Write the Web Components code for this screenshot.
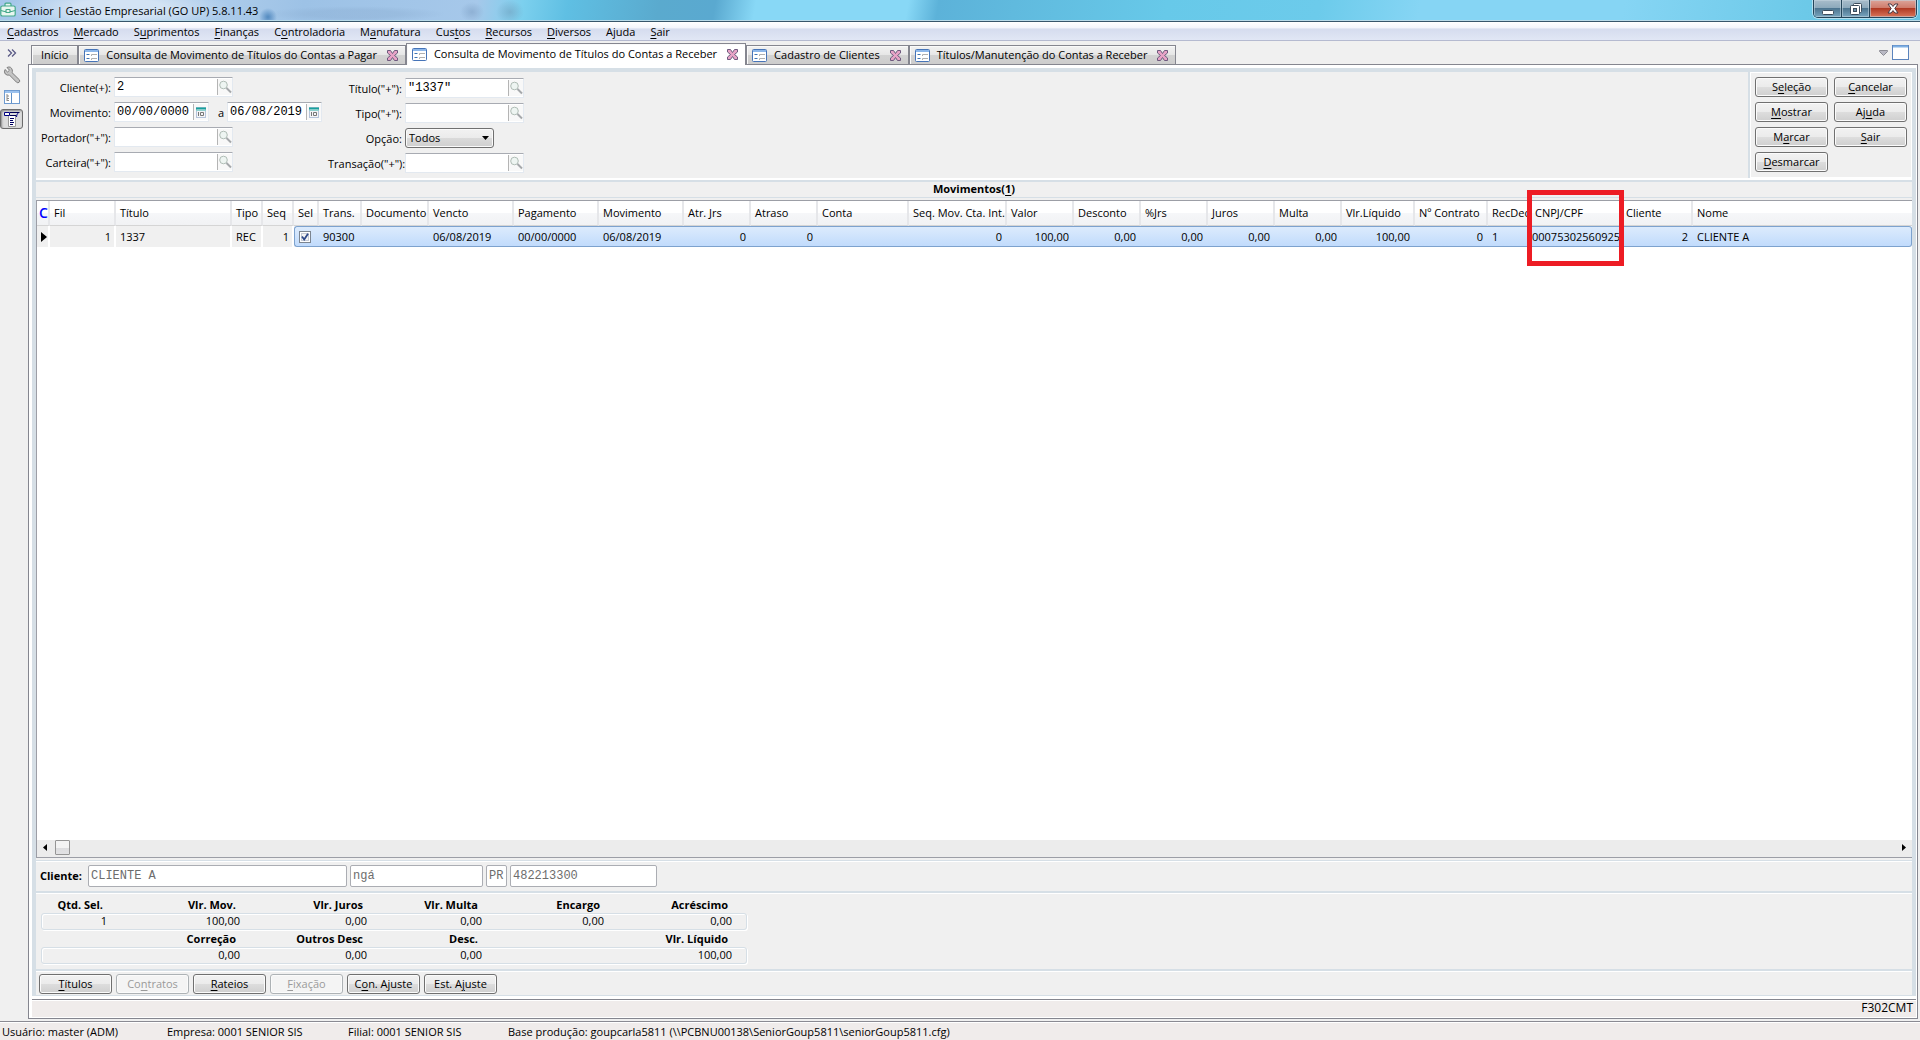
<!DOCTYPE html>
<html lang="pt-BR">
<head>
<meta charset="utf-8">
<title>Senior | Gestão Empresarial</title>
<style>
html, body { margin: 0; height: 100%; overflow: hidden; }
body { font: 11px/16px "Open Sans", "Noto Sans", sans-serif; color: #000; background: #f0f0f0; }
erp-window { height: 100vh; }
</style>
</head>
<body>
<erp-window></erp-window>

<script>
const define = (name, html, setup) => {
  const tpl = document.createElement('template');
  tpl.innerHTML = '<style>*{box-sizing:border-box}u{text-underline-offset:2px}</style>' + html;
  customElements.define(name, class extends HTMLElement {
    constructor() {
      super();
      this.attachShadow({ mode: 'open' });
    }
    connectedCallback() {
      if (this.shadowRoot.childNodes.length) return;
      this.shadowRoot.append(tpl.content.cloneNode(true));
      if (setup) setup(this, this.shadowRoot);
    }
  });
};
const key = t => t.replace(/_(.)/, '<u>$1</u>');

/* ---------- window title ---------- */
define('title-bar', `
<style>
:host { display: flex; align-items: flex-start; height: 22px; border-bottom: 1px solid #37566b; box-shadow: inset 0 -1px #b9dbe9;
  line-height: 21px;
  background:
    radial-gradient(ellipse 14px 12px at 510px 12px, #6f9fbd90 0, #6f9fbd00 100%),
    radial-gradient(ellipse 12px 10px at 472px 12px, #7c9fc490 0, #7c9fc400 100%),
    radial-gradient(ellipse 90px 8px at 355px 14px, #86a8cc50 0 50%, #86a8cc00 100%),
    radial-gradient(ellipse 9px 9px at 268px 17px, #2e6faea0 0 10%, #2e6fae00 100%),
    radial-gradient(ellipse 110px 24px at 120px 8px, #d3e3f4 0 40%, #d3e3f400 100%),
    linear-gradient(100deg, #a5c7ea 0, #aacaea 230px, #9dc2e6 300px, #a6c8ea 470px, #7cd0ee 515px, #5fbfe3 560px, #5aaace 650px, #5aa9d0 705px, #88d8f6 745px, #88d8f6 895px, #5cb2d9 925px, #60bade 1000px, #67c9e9 1150px, #6ccbeb 1300px, #86d5f4 1400px, #86d5f4 1600px, #6cc9e8 1780px, #64c0e0 100%); }
svg { margin: 2px 5px 0 0; flex: none; }
h1 { font: inherit; margin: 0; flex: 1; }
.ctl { display: flex; height: 18px; margin-right: 3px; border: 1px solid #24455a; border-top: 0; border-radius: 0 0 5px 5px; overflow: hidden; box-shadow: 0 0 0 1px #b5e0f0; }
button { border: 0; padding: 0; margin: 0; border-right: 1px solid #24455a; width: 28px; display: flex; align-items: center; justify-content: center;
  background: linear-gradient(#a9bdcb, #8ba8bb 48%, #4d7590 50%, #78a4be); box-shadow: inset 0 0 0 1px #c3d4df90; }
button.x { width: 46px; border: 0; background: linear-gradient(#dca59a, #cf7c6c 45%, #b03a24 50%, #d8755a); }
button svg { margin: 0; }
</style>
<svg width="16" height="16" viewBox="0 0 16 16" fill="#e8f6f0" stroke="#44a98b" stroke-width="1.2"><path d="M5 4V2.2q0-1 1-1h4q1 0 1 1V4"/><rect x=".8" y="4" width="14.4" height="10" rx="1.6"/><path d="M1 8.5q7 2.5 14 0" fill="none"/><rect x="6" y="7.5" width="4" height="3" rx=".6"/></svg>
<h1>Senior | Gestão Empresarial (GO UP) 5.8.11.43</h1>
<div class="ctl">
<button aria-label="Minimizar"><svg width="14" height="14"><rect x="1.5" y="8.5" width="11" height="4" rx="1" fill="#fff" stroke="#3d4c5c"/></svg></button>
<button aria-label="Restaurar"><svg width="14" height="14" fill="#fff" stroke="#3d4c5c"><rect x="4.500" y="1.500" width="8" height="9" rx="1"/><rect x="1.500" y="3.500" width="9" height="9" rx="1"/><rect x="4.500" y="6.500" width="3" height="3" fill="#6d93ab"/></svg></button>
<button class="x" aria-label="Fechar"><svg width="14" height="12"><path d="M2 1h3l2 2.500L9 1h3L8.800 5.500 12 10H9L7 7.600 5 10H2l3.200-4.500z" fill="#fff" stroke="#4a3a44"/></svg></button>
</div>`);

/* ---------- menu ---------- */
define('menu-bar', `
<style>
:host { display: block; height: 19px; border-bottom: 1px solid #b5bad0; background: linear-gradient(#fff, #f2f4fb 35%, #d5dcee 37%, #e1e7f5); line-height: 19px; }
nav { display: flex; gap: 15px; padding-left: 7px; }
a { color: inherit; text-decoration: none; white-space: nowrap; }
</style><nav></nav>`, (host, root) => {
  root.querySelector('nav').innerHTML = host.getAttribute('items').split('|').map(t => `<a href="#">${key(t)}</a>`).join('');
});

/* ---------- left icon strip ---------- */
define('side-strip', `
<style>
:host { display: flex; flex-direction: column; width: 28px; flex: none; padding-top: 1px; }
button { border: 0; background: none; padding: 0; margin: 0; width: 24px; height: 22px; display: flex; align-items: center; justify-content: center; }
button.on { height: 20px; width: 23px; margin-top: 1px; border: 1px solid #6c6c6c; border-radius: 3px; background: #dcdcdc; box-shadow: inset 1px 1px 2px #8c8c8c; }
</style>
<button aria-label="Expandir"><svg width="10" height="8" fill="none" stroke="#5b5b86" stroke-width="1.300"><path d="M1 .5 4.500 4 1 7.500M5 .5 8.500 4 5 7.500"/></svg></button>
<button aria-label="Ferramentas"><svg width="18" height="18" viewBox="0 0 18 18"><path d="M2 3.500 4.600 6 6.500 4.200 4 1.500Q8-.3 9.300 4q.3 1.700-.3 2.600l7.400 7.200q.9 1.500-.4 2.600-1.300.8-2.500-.2L6.400 9Q4 9.700 2.300 8 .7 6 2 3.500z" fill="#c4c4c4" stroke="#7f7f7f"/></svg></button>
<button aria-label="Navegador"><svg width="16" height="14" viewBox="0 0 16 14"><rect x=".5" y=".5" width="15" height="13" fill="#fff" stroke="#6f9bd0"/><path d="M1 2h14" stroke="#9cc2ee" stroke-width="2"/><path d="M7.500 3v10" stroke="#5f90c8"/><path d="M3 4v7M3 6h2M3 8.500h2M3 10.500h2" stroke="#8a8a8a"/></svg></button>
<button class="on" aria-label="Formulário"><svg width="16" height="15" viewBox="0 0 16 15"><path d="M4.500 4v10.500h7V4" fill="#fff" stroke="#9a9a9a"/><path d="M.5.5h5v3h-5z" fill="#fff" stroke="#000080"/><path d="M6 .5h9.500M6 3.500h6" stroke="#000050"/><path d="M14.500 1q-2 .5-2 4" stroke="#000080" fill="none"/><path d="M6 6.500h4M6 8.500h3M6 10.500h4M6 12.500h3" stroke="#000060"/></svg></button>`);

/* ---------- editor tab ---------- */
define('editor-tab', `
<style>
:host { display: flex; align-items: center; height: 19px; border: 1px solid #85868f; border-bottom: 0; box-shadow: inset 1px 1px #fafafa; background: linear-gradient(#f2f2f2, #e6e6e6 50%, #d2d2d2 52%, #cdcdcd); padding: 0 7px 0 5px; white-space: nowrap; }
:host([plain]) { padding: 0 9px; }
:host([active]) { height: 22px; margin-bottom: -1px; background: #fff; z-index: 1; padding-bottom: 1px; }
.ico { margin-right: 7px; flex: none; }
.label { flex: 1; }
button { border: 0; background: none; padding: 0; height: 11px; width: 11px; margin-left: 10px; display: flex; }
:host([plain]) .ico, :host([plain]) button { display: none; }
</style>
<svg class="ico" width="15" height="13"><rect x=".5" y=".5" width="14" height="12" rx="1" fill="#fff" stroke="#4674b8"/><path d="M1 2h13" stroke="#8db7ea" stroke-width="2"/><path d="M2.500 5.500h3M2.500 9.500h3" stroke="#3f74b5"/><path d="M7.500 7V5.500H13M7.500 11V9.500H13" stroke="#b0b0b0" fill="none"/></svg>
<span class="label"><slot></slot></span>
<button aria-label="Fechar aba"><svg width="11" height="11"><path d="M.5.5h3l2 3 2-3h3v2.500l-3 2.500 3 2.500v2.500h-3l-2-3-2 3h-3V8l3-2.500-3-2.500z" fill="#e7a3c6" stroke="#6e5a7e"/></svg></button>`);

/* ---------- lookup / date field ---------- */
define('lookup-field', `
<style>
:host { display: flex; align-items: center; gap: 3px; }
label { width: var(--lw, 75px); text-align: right; white-space: nowrap; padding-top: var(--lp, 1px); }
.box { display: flex; width: 119px; height: 20px; background: #fff; border: 1px solid #e3e9f0; border-top-color: #a8abb2; border-radius: 1px; }
:host([date]) .box { width: 95px; }
input { flex: 1; min-width: 0; border: 0; outline: 0; background: none; padding: 0 0 0 2px; font: 12px/16px "Liberation Mono", monospace; color: #000; }
button { width: 15px; margin: 1px 0; border: 0; border-left: 1px solid #b4b4b4; background: #f8f8f8; padding: 0; display: flex; align-items: center; justify-content: center; }
.cal { display: none; }
:host([date]) .cal { display: block; }
:host([date]) .lens { display: none; }
</style>
<label for="i"></label>
<div class="box"><input id="i"><button aria-label="Pesquisar">
<svg class="lens" width="13" height="14" fill="none"><circle cx="4.500" cy="5" r="3.800" fill="#eef5f2" stroke="#b0bdb6"/><path d="m7.500 8 4.500 4.500" stroke="#a5a8ab" stroke-width="2"/></svg>
<svg class="cal" width="10" height="11"><rect x=".5" y=".5" width="9" height="10" fill="#f4f4f6" stroke="#b5c3da"/><path d="M0 1.500h10" stroke="#18a09c" stroke-width="2"/><path d="M0 3.500h10" stroke="#8fd0ce"/><path d="M2.500 5v4M4.500 5.500h3v3h-3z" stroke="#777" fill="none"/></svg>
</button></div>`, (host, root) => {
  root.querySelector('label').textContent = host.getAttribute('label');
  root.querySelector('input').value = host.getAttribute('value') || '';
});

define('option-field', `
<style>
:host { display: flex; align-items: center; gap: 3px; height: 20px; }
label { width: var(--lw, 75px); text-align: right; padding-top: var(--lp, 1px); }
.wrap { display: flex; align-items: center; width: 89px; height: 20px; border: 1px solid #707070; border-radius: 3px; box-shadow: inset 0 0 0 1px #fafafa; background: linear-gradient(#f2f2f2, #ebebeb 50%, #dadada 52%, #cfcfcf); padding-right: 4px; }
select { appearance: none; border: 0; background: none; flex: 1; padding: 0 0 0 3px; font: inherit; height: 18px; color: #000; outline: 0; }
</style>
<label for="s">Opção:</label><div class="wrap"><select id="s"><option>Todos</option></select><svg width="7" height="4"><path d="M0 0h7L3.500 4z"/></svg></div>`);

/* ---------- command button ---------- */
define('push-button', `
<style>
:host { display: block; width: 73px; }
button { width: 100%; height: 20px; padding: 0; border: 1px solid #707070; border-radius: 3px; box-shadow: inset 0 0 0 1px #fbfbfb; background: linear-gradient(#f2f2f2, #ebebeb 50%, #dddddd 52%, #cfcfcf); font: inherit; line-height: 18px; color: #000; white-space: nowrap; }
button:disabled { background: #f4f4f4; border-color: #adb2b5; color: #9a9a9a; }
</style><button></button>`, (host, root) => {
  const b = root.querySelector('button');
  b.innerHTML = key(host.getAttribute('label'));
  b.disabled = host.hasAttribute('off');
});

/* ---------- etched panel ---------- */
define('etched-panel', `
<style>
:host { display: flex; border: 1px solid #d6dfe6; border-width: 1px 0; box-shadow: inset 0 1px #fff, 0 1px #fff; }
</style><slot></slot>`);

/* ---------- search form ---------- */
define('search-form', `
<style>
:host { display: flex; height: 106px; }
.col { display: flex; flex-direction: column; gap: 5px; padding-top: 5px; }
.c2 { padding-top: 6px; --lw: 74px; --lp: 2px; padding-left: 6px; }
.pair { display: flex; align-items: center; gap: 6px; }
.pair lookup-field + lookup-field { --lw: 9px; }
.space { flex: 1; }
.cmds { width: 164px; border-left: 2px solid #d6dfe6; box-shadow: inset 1px 1px #fff, inset -1px -1px #fff; display: grid; grid-template-columns: 73px 73px; gap: 5px 6px; align-content: start; padding: 5px 0 0 5px; }
</style>
<div class="col">
<lookup-field label="Cliente(+):" value="2"></lookup-field>
<div class="pair"><lookup-field date label="Movimento:" value="00/00/0000"></lookup-field><lookup-field date label="a" value="06/08/2019"></lookup-field></div>
<lookup-field label='Portador("+"):'></lookup-field>
<lookup-field label='Carteira("+"):'></lookup-field>
</div>
<div class="col c2">
<lookup-field label='Título("+"):' value='"1337"'></lookup-field>
<lookup-field label='Tipo("+"):'></lookup-field>
<option-field></option-field>
<lookup-field label='Transação("+"):'></lookup-field>
</div>
<div class="space"></div>
<div class="cmds">
<push-button label="S_eleção"></push-button><push-button label="_Cancelar"></push-button>
<push-button label="_Mostrar"></push-button><push-button label="Aj_uda"></push-button>
<push-button label="M_arcar"></push-button><push-button label="_Sair"></push-button>
<push-button label="_Desmarcar"></push-button>
</div>`);

/* ---------- movements grid ---------- */
define('movement-grid', `
<style>
:host { display: flex; flex-direction: column; flex: 1; min-height: 0; background: #fff; border: 1px solid #9c9ea6; border-right: 0; }
.view { flex: 1; }
table { width: 100%; border-spacing: 0; table-layout: fixed; }
th { position: relative; height: 25px; font-weight: 400; text-align: left; padding: 0 0 0 4px; white-space: nowrap; background: linear-gradient(#fff 50%, #f6f7f9 52%, #f1f2f4); border-bottom: 1px solid #d5d5d5; border-right: 2px solid #e6e7ea; overflow: hidden; }
th:last-child { border-right: 0; }
th:first-child { color: #00f; font-size: 14px; font-weight: 600; padding-left: 2px; }
th.marked { overflow: visible; }
td { height: 21px; padding: 0 5px 0 4px; white-space: nowrap; border: 1px solid #7da2ce; border-width: 1px 0; background: linear-gradient(#dcebfd, #c1dbfc); line-height: 16px; }
td.fix { background: #f0f0f0; border-width: 0 2px 0 0; border-color: #fff; padding-right: 3px; }
td.sel { border-left-width: 1px; border-radius: 3px 0 0 3px; padding: 0 0 0 4px; }
td:last-child { border-right-width: 1px; border-radius: 0 3px 3px 0; }
td.r { text-align: right; }
td.ptr { padding: 0 0 0 4px; }
td.tight { padding: 0 0 0 1px; }
svg { display: block; }
input { appearance: none; display: block; width: 12px; height: 12px; margin: 0; border: 1px solid #7c8590; background: #f4f4f4; box-shadow: inset 0 0 0 1px #fff, inset 0 0 0 2px #c5cbd6; }
.chk { position: relative; display: block; width: 12px; }
.chk svg { position: absolute; left: 2px; top: 2px; pointer-events: none; }
.mark { position: absolute; left: -4px; top: -11px; width: 97px; height: 76px; border: 5px solid #ed1c24; z-index: 2; }
.bar { height: 17px; background: #ececec; display: flex; align-items: center; padding: 0 6px 2px; }
.thumb { width: 15px; height: 15px; border: 1px solid #959595; border-radius: 1px; background: linear-gradient(#f3f3f3 50%, #dcdcde 52%, #e2e2e4); margin-left: 8px; }
.bar i { flex: 1; }
</style>
<div class="view"><table><colgroup></colgroup><thead><tr></tr></thead><tbody><tr></tr></tbody></table></div>
<div class="bar"><svg width="4" height="7"><path d="M4 0v7L0 3.500z"/></svg><div class="thumb"></div><i></i><svg width="4" height="7"><path d="M0 0v7l4-3.500z"/></svg></div>`, (host, root) => {
  const cols = [
    ['C', 13, '', 'fix ptr'], ['Fil', 66, '1', 'fix r'], ['Título', 116, '1337', 'fix'], ['Tipo', 31, 'REC', 'fix'], ['Seq', 31, '1', 'fix r'],
    ['Sel', 25, '', 'sel'], ['Trans.', 43, '90300', ''], ['Documento', 67, '', ''], ['Vencto', 85, '06/08/2019', ''], ['Pagamento', 85, '00/00/0000', ''],
    ['Movimento', 85, '06/08/2019', ''], ['Atr. Jrs', 67, '0', 'r'], ['Atraso', 67, '0', 'r'], ['Conta', 91, '', ''], ['Seq. Mov. Cta. Int.', 98, '0', 'r'],
    ['Valor', 67, '100,00', 'r'], ['Desconto', 67, '0,00', 'r'], ['%Jrs', 67, '0,00', 'r'], ['Juros', 67, '0,00', 'r'], ['Multa', 67, '0,00', 'r'],
    ['Vlr.Líquido', 73, '100,00', 'r'], ['Nº Contrato', 73, '0', 'r'], ['RecDec', 43, '1', ''], ['CNPJ/CPF', 91, '00075302560925', 'tight'],
    ['Cliente', 71, '2', 'r'], ['Nome', 0, 'CLIENTE A', '']
  ];
  root.querySelector('colgroup').innerHTML = cols.map(c => `<col${c[1] ? ` style="width:${c[1]}px"` : ''}>`).join('');
  root.querySelector('thead tr').innerHTML = cols.map(c => `<th${c[0] === 'CNPJ/CPF' ? ' class="marked"' : ''}>${c[0]}${c[0] === 'CNPJ/CPF' ? '<span class="mark"></span>' : ''}</th>`).join('');
  root.querySelector('tbody tr').innerHTML = cols.map((c, n) => {
    let v = c[2];
    if (n === 0) v = '<svg width="6" height="10"><path d="M0 0v10l6-5z"/></svg>';
    if (n === 5) v = '<span class="chk"><input type="checkbox" checked aria-label="Selecionar"><svg width="8" height="8" fill="none"><path d="M1 3.500 3.200 6.500 7 .8" stroke="#2f4a8a" stroke-width="1.800"/></svg></span>';
    return `<td class="${c[3]}">${v}</td>`;
  }).join('');
});

/* ---------- customer line ---------- */
define('customer-line', `
<style>
:host { display: flex; align-items: center; gap: 3px; padding: 0 0 0 4px; height: 30px; }
label { font-weight: 700; margin-right: 2px; width: 43px; }
input { height: 22px; border: 1px solid #abadb3; border-radius: 2px; background: #fff; color: #6d6d6d; padding: 0 2px 1px; font: 12px/16px "Liberation Mono", monospace; outline: 0; }
.a { width: 259px; } .b { width: 133px; } .c { width: 21px; padding-right: 0; } .d { width: 147px; }
</style>
<label for="c">Cliente:</label><input id="c" class="a" value="CLIENTE A" readonly><input class="b" value="ngá" aria-label="Cidade" readonly><input class="c" value="PR" aria-label="UF" readonly><input class="d" value="482213300" aria-label="Código" readonly>`);

/* ---------- totals ---------- */
define('totals-row', `
<style>
:host { display: block; width: 706px; }
.g { display: grid; grid-template-columns: 66px 133px 127px 115px 122px 128px; text-align: right; }
b { padding-right: 4px; height: 16px; }
.v { border: 1px solid #d6dfe6; border-radius: 3px; box-shadow: inset 1px 1px #fff, 1px 1px #fff; height: 17px; line-height: 14px; }
.v span { padding-right: 1px; }
</style>
<div class="g h"></div><div class="g v"></div>`, (host, root) => {
  root.querySelector('.h').innerHTML = host.getAttribute('heads').split('|').map(t => `<b>${t}</b>`).join('');
  root.querySelector('.v').innerHTML = host.getAttribute('values').split('|').map(t => `<span>${t}</span>`).join('');
});

/* ---------- status bar ---------- */
define('status-bar', `
<style>
:host { display: flex; height: 19px; border-top: 1px solid #8a8a92; box-shadow: inset 0 1px #fff; background: #f0eceb; line-height: 19px; white-space: nowrap; overflow: hidden; padding-left: 2px; }
span { flex: none; }
</style>
<span style="width:165px">Usuário: master (ADM)</span><span style="width:181px">Empresa: 0001 SENIOR SIS</span><span style="width:160px">Filial: 0001 SENIOR SIS</span><span>Base produção: goupcarla5811 (\\\\PCBNU00138\\SeniorGoup5811\\seniorGoup5811.cfg)</span>`);

/* ---------- whole window ---------- */
define('erp-window', `
<style>
:host { display: flex; flex-direction: column; }
.main { flex: 1; display: flex; min-height: 0; }
.work { flex: 1; display: flex; flex-direction: column; min-width: 0; padding: 2px 2px 2px 0; }
.tabs { display: flex; align-items: flex-end; height: 21px; padding-left: 3px; }
.tabs .end { flex: 1; display: flex; justify-content: flex-end; gap: 4px; padding: 0 9px 4px 0; align-items: center; }
.frame { flex: 1; display: flex; flex-direction: column; min-height: 0; border: 1px solid #85868f; background: #fff; padding: 3px 1px 1px 3px; }
.body { flex: 1; display: flex; flex-direction: column; min-height: 0; background: #f0f0f0; border: 4px solid #d6dfe6; border-bottom: 0; }
h2 { margin: 0 0 2px; border-top: 2px solid #d6dfe6; border-bottom: 1px solid #d6dfe6; font: inherit; font-weight: 700; text-align: center; height: 18px; line-height: 14px; flex: none; }
.sep { border-top: 2px solid #fff; }
.totals { padding: 4px 0 0 5px; height: 78px; gap: 1px; flex-direction: column; }
.btns { gap: 4px; padding: 3px 0 3px 3px; height: 26px; }
.foot { border-top: 1px solid #85868f; background: #f0eceb; height: 18px; text-align: right; padding-right: 3px; margin-top: 3px; box-shadow: inset 0 1px #fff; font-size: 12px; line-height: 16px; }
</style>
<title-bar></title-bar>
<menu-bar items="_Cadastros|_Mercado|S_uprimentos|_Finanças|C_ontroladoria|M_anufatura|Cus_tos|_Recursos|_Diversos|Ajuda|_Sair"></menu-bar>
<div class="main">
<side-strip></side-strip>
<div class="work">
<div class="tabs">
<editor-tab plain>Início</editor-tab><editor-tab>Consulta de Movimento de Títulos do Contas a Pagar</editor-tab><editor-tab active>Consulta de Movimento de Títulos do Contas a Receber</editor-tab><editor-tab>Cadastro de Clientes</editor-tab><editor-tab>Títulos/Manutenção do Contas a Receber</editor-tab>
<div class="end"><svg width="9" height="6"><path d="M.5.5h8v1l-4 4-4-4z" fill="#b9b9c4" stroke="#8c8c94"/></svg><svg width="17" height="15"><rect x=".5" y=".5" width="16" height="14" fill="#fff" stroke="#5b84bd"/><path d="M1 1.500h15" stroke="#7fb0e4" stroke-width="2"/></svg></div>
</div>
<div class="frame">
<div class="body">
<search-form></search-form>
<div class="sep"></div>
<h2>Movimentos(<u>1</u>)</h2>
<movement-grid></movement-grid>
<etched-panel style="margin-top:2px"><customer-line></customer-line></etched-panel>
<etched-panel class="totals">
<totals-row heads="Qtd. Sel.|Vlr. Mov.|Vlr. Juros|Vlr. Multa|Encargo|Acréscimo" values="1|100,00|0,00|0,00|0,00|0,00"></totals-row>
<totals-row heads="|Correção|Outros Desc|Desc.||Vlr. Líquido" values="|0,00|0,00|0,00||100,00"></totals-row>
</etched-panel>
<etched-panel class="btns"><push-button label="_Títulos"></push-button><push-button off label="Co_ntratos"></push-button><push-button label="_Rateios"></push-button><push-button off label="_Fixação"></push-button><push-button label="C_on. Ajuste"></push-button><push-button label="Est. A_juste"></push-button></etched-panel>
</div>
<div class="foot">F302CMT</div>
</div>
</div>
</div>
<status-bar></status-bar>`);
</script>
</body>
</html>
